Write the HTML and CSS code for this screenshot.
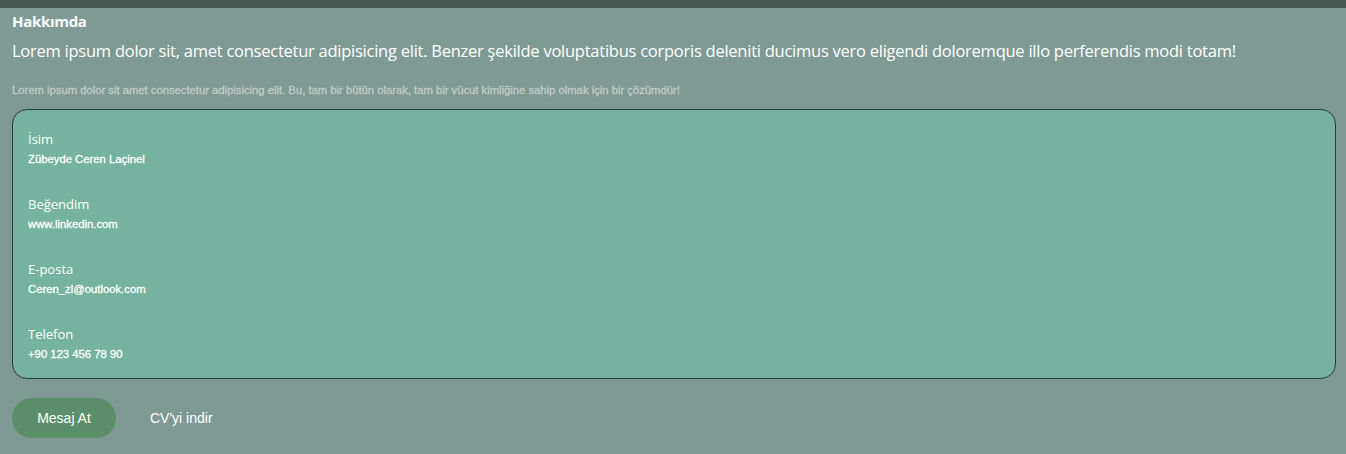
FILE: index.html
```html
<!DOCTYPE html>
<html lang="tr">
<head>
<meta charset="utf-8">
<link rel="stylesheet" href="styles.css">
</head>
<body>
<div class="topbar"></div>
<main class="about">
  <h2 class="title">Hakkımda</h2>
  <p class="lead">Lorem ipsum dolor sit, amet consectetur adipisicing elit. Benzer şekilde voluptatibus corporis deleniti ducimus vero eligendi doloremque illo perferendis modi totam!</p>
  <p class="note">Lorem ipsum dolor sit amet consectetur adipisicing elit. Bu, tam bir bütün olarak, tam bir vücut kimliğine sahip olmak için bir çözümdür!</p>
  <section class="card">
    <div class="item"><div class="label">İsim</div><div class="value">Zübeyde Ceren Laçinel</div></div>
    <div class="item"><div class="label">Beğendim</div><div class="value">www.linkedin.com</div></div>
    <div class="item"><div class="label">E-posta</div><div class="value">Ceren_zl@outlook.com</div></div>
    <div class="item"><div class="label">Telefon</div><div class="value">+90 123 456 78 90</div></div>
  </section>
  <div class="actions">
    <a class="btn primary">Mesaj At</a>
    <a class="btn link">CV'yi indir</a>
  </div>
</main>
</body>
</html>
```
FILE: styles.css
```css
html, body { margin: 0; padding: 0; }
body {
  background: #7f9a95;
  color: #ffffff;
  font-family: "Liberation Sans", Arial, sans-serif;
  height: 454px;
  overflow: hidden;
}
.topbar { height: 8px; background: #445a53; }
.about { padding: 0 10px 0 12px; }
.title {
  margin: 3px 0 0;
  font-family: "Open Sans", sans-serif;
  font-weight: 700;
  font-size: 15px;
  line-height: 20px;
  letter-spacing: -0.3px;
}
.lead {
  margin: 9px 0 0;
  font-family: "Open Sans", sans-serif;
  font-size: 16.5px;
  line-height: 22px;
  letter-spacing: -0.25px;
}
.note {
  margin: 22px 0 0;
  font-size: 11.25px;
  line-height: 12px;
  color: #c3cbc8;
  -webkit-text-stroke: 0.3px #c3cbc8;
}
.card {
  margin-top: 13px;
  background: #75b29f;
  border: 1px solid #2b3d3a;
  border-radius: 15px;
  height: 270px;
  box-sizing: border-box;
  padding: 20px 15px 0;
  display: flex;
  flex-direction: column;
  gap: 29px;
}
.item { display: flex; flex-direction: column; gap: 4px; }
.label {
  font-family: "Open Sans", sans-serif;
  font-size: 13px;
  line-height: 18px;
}
.value {
  font-size: 11.3px;
  line-height: 14px;
  -webkit-text-stroke: 0.3px #fff;
}
.actions {
  margin-top: 19px;
  display: flex;
  align-items: center;
  gap: 34px;
}
.btn { font-size: 14px; color: #fff; text-decoration: none; }
.btn.primary {
  background: #5a8f6a;
  border-radius: 20px;
  width: 104px;
  height: 40px;
  display: flex;
  align-items: center;
  justify-content: center;
}
```
